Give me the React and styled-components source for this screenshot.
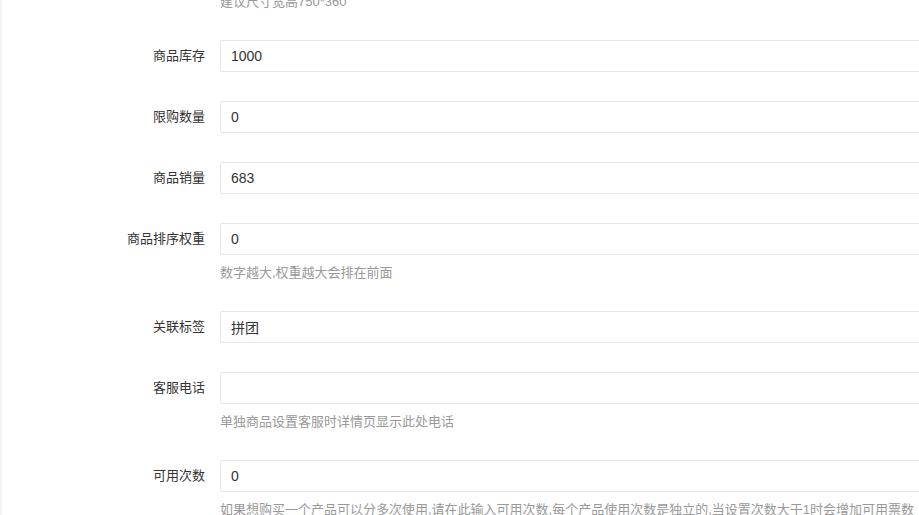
import React from "react"
import styled, { createGlobalStyle } from "styled-components"

const GlobalStyle = createGlobalStyle`
  html, body {
    margin: 0;
    padding: 0;
    background: #fff;
    overflow: hidden;
  }
  body {
    font-family: "Liberation Sans", "Noto Sans CJK SC", sans-serif;
    color: #333;
  }
`

const Page = styled.div`
  width: 1200px;
  height: 515px;
  border-left: 2px solid #f3f3f3;
  overflow: hidden;
`

const Form = styled.div`
  margin-top: -7px;
`

const Item = styled.div`
  display: grid;
  grid-template-columns: 218px 800px;
  margin-bottom: 29px;
`

const Label = styled.label`
  font-size: 13px;
  line-height: 32px;
  text-align: right;
  padding-right: 15px;
  color: #333;
`

const Block = styled.div`
  grid-column: 2;
`

const Input = styled.input`
  display: block;
  box-sizing: border-box;
  width: 100%;
  height: 32px;
  padding: 0 10px;
  border: 1px solid #e6e6e6;
  border-radius: 2px;
  font-family: inherit;
  font-size: 14px;
  color: #333;
  outline: none;
  background: #fff;
`

const Help = styled.div`
  padding-top: ${(p) => (p.$top ? 0 : 9)}px;
  font-size: 13px;
  line-height: 18px;
  color: #999;
  white-space: nowrap;
`

const fields = [
  { label: "商品库存", value: "1000" },
  { label: "限购数量", value: "0" },
  { label: "商品销量", value: "683" },
  { label: "商品排序权重", value: "0", help: "数字越大,权重越大会排在前面" },
  { label: "关联标签", value: "拼团" },
  { label: "客服电话", value: "", help: "单独商品设置客服时详情页显示此处电话" },
  {
    label: "可用次数",
    value: "0",
    help: "如果想购买一个产品可以分多次使用,请在此输入可用次数,每个产品使用次数是独立的,当设置次数大于1时会增加可用票数",
  },
]

export default function App() {
  return (
    <>
      <GlobalStyle />
      <Page>
        <Form>
          <Item>
            <Block>
              <Help $top>建议尺寸宽高750*360</Help>
            </Block>
          </Item>
          {fields.map((f) => (
            <Item key={f.label}>
              <Label>{f.label}</Label>
              <Block>
                <Input defaultValue={f.value} />
                {f.help && <Help>{f.help}</Help>}
              </Block>
            </Item>
          ))}
        </Form>
      </Page>
    </>
  )
}
